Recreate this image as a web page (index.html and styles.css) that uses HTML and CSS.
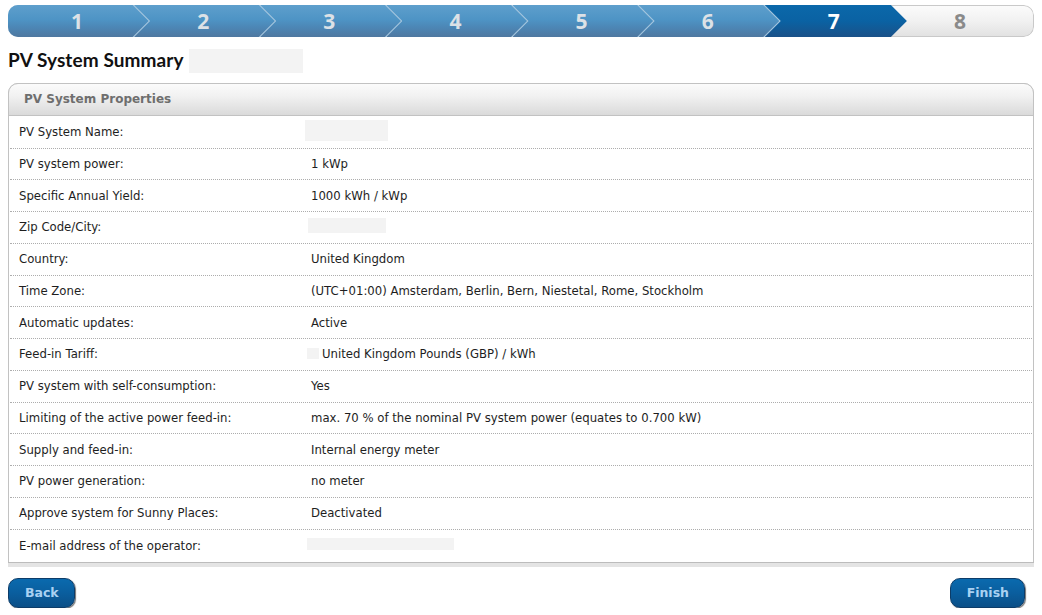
FILE: index.html
```html
<!DOCTYPE html>
<html lang="en">
<head>
<meta charset="utf-8">
<title>PV System Summary</title>
<link rel="stylesheet" href="styles.css">
</head>
<body>
<div class="wizard">
  <ol class="steps">
    <li class="step done"><span>1</span></li>
    <li class="step done"><span>2</span></li>
    <li class="step done"><span>3</span></li>
    <li class="step done"><span>4</span></li>
    <li class="step done"><span>5</span></li>
    <li class="step done"><span>6</span></li>
    <li class="step current"><span>7</span></li>
    <li class="step todo"><span>8</span></li>
  </ol>

  <div class="title-row">
    <h1 class="title">PV System Summary</h1>
    <span class="mask mask-title"></span>
  </div>

  <section class="panel">
    <header class="panel-head">PV System Properties</header>
    <dl class="props">
      <div class="row"><dt>PV System Name:</dt><dd><span class="mask mask-name"></span></dd></div>
      <div class="row"><dt>PV system power:</dt><dd>1 kWp</dd></div>
      <div class="row"><dt>Specific Annual Yield:</dt><dd>1000 kWh / kWp</dd></div>
      <div class="row"><dt>Zip Code/City:</dt><dd><span class="mask mask-zip"></span></dd></div>
      <div class="row"><dt>Country:</dt><dd>United Kingdom</dd></div>
      <div class="row"><dt>Time Zone:</dt><dd>(UTC+01:00) Amsterdam, Berlin, Bern, Niestetal, Rome, Stockholm</dd></div>
      <div class="row"><dt>Automatic updates:</dt><dd>Active</dd></div>
      <div class="row"><dt>Feed-in Tariff:</dt><dd><span class="mask mask-tariff"></span>United Kingdom Pounds (GBP) / kWh</dd></div>
      <div class="row"><dt>PV system with self-consumption:</dt><dd>Yes</dd></div>
      <div class="row"><dt>Limiting of the active power feed-in:</dt><dd>max. 70 % of the nominal PV system power (equates to 0.700 kW)</dd></div>
      <div class="row"><dt>Supply and feed-in:</dt><dd>Internal energy meter</dd></div>
      <div class="row"><dt>PV power generation:</dt><dd>no meter</dd></div>
      <div class="row"><dt>Approve system for Sunny Places:</dt><dd>Deactivated</dd></div>
      <div class="row"><dt>E-mail address of the operator:</dt><dd><span class="mask mask-mail"></span></dd></div>
    </dl>
    <div class="panel-foot"></div>
  </section>

  <div class="actions">
    <button class="btn" type="button">Back</button>
    <button class="btn" type="button">Finish</button>
  </div>
</div>
</body>
</html>
```

FILE: styles.css
```css
* { box-sizing: border-box; }

html, body { background: #ffffff; }

body {
  margin: 5px 8px 0;
  font-family: "DejaVu Sans", Verdana, sans-serif;
  color: #1e1e1e;
}

/* ---------- stepper ---------- */
.steps {
  list-style: none;
  margin: 0;
  padding: 0;
  display: flex;
  height: 32px;
  border-radius: 10px;
  overflow: hidden;
}

.step {
  position: relative;
  flex: 1 1 0;
  display: flex;
  align-items: center;
  justify-content: center;
  padding-right: 4px;
  font-family: "Open Sans", "DejaVu Sans", sans-serif;
  font-weight: 700;
  font-size: 21px;
}

.step span { position: relative; z-index: 1; }

.step.done,
.step.current {
  margin-right: -16px;
  clip-path: polygon(0 0, calc(100% - 16px) 0, 100% 50%, calc(100% - 16px) 100%, 0 100%);
}

.step.done { background: #a7c7df; color: #dce1e6; }

.step.done::before {
  content: "";
  position: absolute;
  top: 0; bottom: 0; left: 0; right: 1.5px;
  background: linear-gradient(#5e9fcc 0%, #4e94c5 45%, #4c86b5 70%, #4f78a0 100%);
  clip-path: polygon(0 0, calc(100% - 16px) 0, 100% 50%, calc(100% - 16px) 100%, 0 100%);
}

.step:nth-child(1) { z-index: 8; }
.step:nth-child(2) { z-index: 7; }
.step:nth-child(3) { z-index: 6; }
.step:nth-child(4) { z-index: 5; }
.step:nth-child(5) { z-index: 4; }
.step:nth-child(6) { z-index: 3; }
.step:nth-child(7) { z-index: 2; }
.step:nth-child(8) { z-index: 1; }

.step.current {
  background: linear-gradient(#0b68aa 0%, #0a62a3 50%, #1a5188 100%);
  color: #ffffff;
}

.step.todo {
  background: linear-gradient(#fbfbfb 0%, #f1f1f1 50%, #e2e2e2 100%);
  border: 1px solid #c9c9c9;
  border-left: none;
  border-radius: 0 10px 10px 0;
  color: #8a8a8a;
}

/* ---------- title ---------- */
.title-row {
  display: flex;
  align-items: center;
  gap: 5px;
  height: 24px;
  margin: 12px 0 10px;
}

.title {
  margin: 0 0 3px;
  font-family: "Lato", "DejaVu Sans", sans-serif;
  font-weight: 700;
  font-size: 19px;
  color: #111;
  letter-spacing: 0.1px;
}

.mask { display: inline-block; background: #f3f3f3; }
.mask-title { width: 114px; height: 24px; }
.mask-name { width: 83px; height: 21px; margin-left: -6px; }
.mask-zip { width: 78px; height: 15px; margin-left: -3px; }
.mask-tariff { width: 12px; height: 11px; margin-left: -4px; margin-right: 3px; vertical-align: -1px; }
.mask-mail { width: 147px; height: 12px; margin-left: -4px; }

/* ---------- panel ---------- */
.panel {
  border: 1px solid #c2c2c2;
  border-bottom: none;
  border-radius: 10px 10px 0 0;
}

.panel-head {
  height: 33px;
  margin: -1px -1px 0;
  border: 1px solid #c2c2c2;
  border-radius: 10px 10px 0 0;
  background: linear-gradient(#fbfbfb 0%, #f1f1f1 40%, #dadada 100%);
  padding: 0 15px 1px;
  display: flex;
  align-items: center;
  font-weight: 700;
  font-size: 12px;
  color: #6e6e6e;
}

.props {
  margin: 0;
  padding: 0 1px;
}

.row {
  display: grid;
  grid-template-columns: 292px 1fr;
  align-items: center;
  height: 31.75px;
  padding-left: 9px;
  border-bottom: 1px dotted #adadad;
  font-size: 11.7px;
}

.row:first-child { height: 32.5px; }
.row:last-child { border-bottom: none; height: 32px; }

.row dt, .row dd { margin: 0; white-space: nowrap; }

.panel-foot {
  height: 5px;
  margin: 0 -1px;
  border-top: 1px solid #bcbcbc;
  background: #e4e4e4;
}

/* ---------- actions ---------- */
.actions {
  display: flex;
  justify-content: space-between;
  margin-top: 11px;
  padding-right: 9px;
}

.btn {
  height: 30px;
  padding: 0 15px 0 16px;
  border: 1px solid #0d3c68;
  border-radius: 10px;
  background: linear-gradient(#0a6aae 0%, #0a5e9e 50%, #0b4f87 100%);
  box-shadow: 1px 1px 1px rgba(0, 0, 0, 0.55);
  font-family: "DejaVu Sans", Verdana, sans-serif;
  font-weight: 700;
  font-size: 12.5px;
  color: #a9d1f2;
  cursor: pointer;
}
```
